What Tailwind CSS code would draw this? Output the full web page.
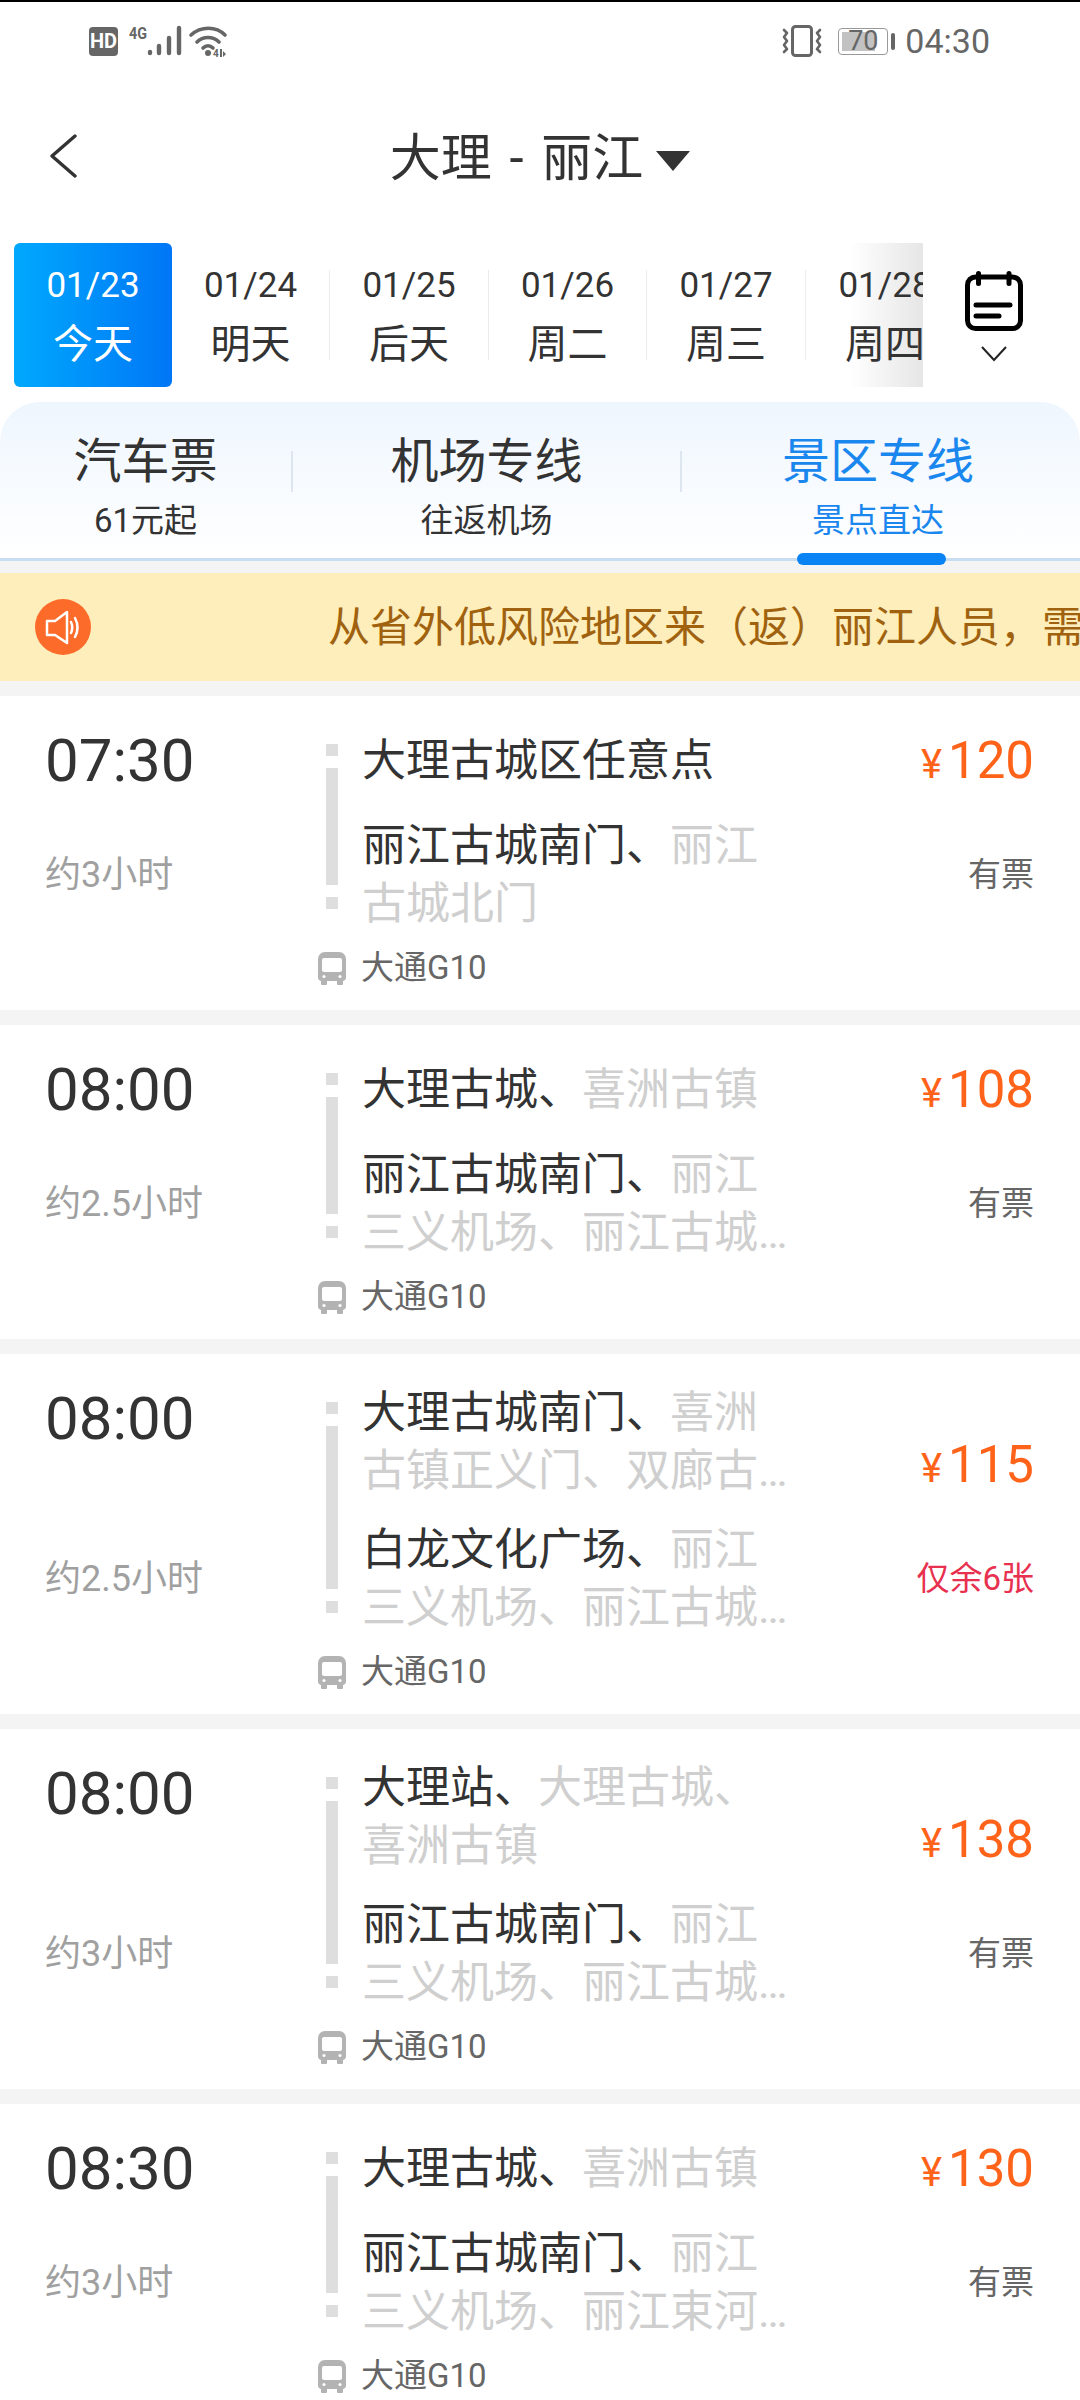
<!DOCTYPE html>
<html lang="zh-CN">
  <head>
    <meta charset="UTF-8" />
    <meta name="viewport" content="width=device-width, initial-scale=1.0" />
    <title>大理 - 丽江</title>
    <script src="https://cdn.jsdelivr.net/npm/@tailwindcss/browser@4"></script>
  </head>
  <body class="bg-[#f4f4f4] font-[family-name:Roboto,'Noto_Sans_CJK_SC',sans-serif] text-[#333333]">
    <div class="w-[1080px] h-[2400px] overflow-hidden flex flex-col">
      <!-- top white part -->
      <div class="bg-white border-t-2 border-black">
        <!-- status bar -->
        <div class="h-[78px] flex items-center justify-between pl-[89px] pr-[90px] text-[#666666]">
          <div class="flex items-center">
            <div class="w-[29px] h-[29px] rounded-[4px] bg-[#666666] text-white text-[20px] leading-[29px] font-bold text-center">HD</div>
            <svg width="106" height="32" viewBox="0 0 106 32" class="ml-[11px]">
              <text x="0" y="14" font-size="17" font-weight="700" textLength="18" lengthAdjust="spacingAndGlyphs" fill="#666666">4G</text>
              <g stroke="#666666" stroke-width="4.4" stroke-linecap="round">
                <path d="M21 28v-1" /><path d="M30 28v-7" /><path d="M40 28v-15" /><path d="M50 28v-25" />
              </g>
              <g fill="none" stroke="#666666" stroke-width="3.6" stroke-linecap="round">
                <path d="M62 10c10-9 25-9 34 0" />
                <path d="M68 17c6-6 16-6 22 0" />
                <path d="M74 23c3-3 7-3 10 0" />
              </g>
              <circle cx="79" cy="28" r="3" fill="#666666" />
              <text x="84" y="32" font-size="10" font-weight="700" fill="#666666">4</text>
              <path d="M91 24h2v8h-2zM94 26l3 3-3 3z" fill="#666666" />
            </svg>
          </div>
          <div class="flex items-center">
            <svg width="40" height="32" viewBox="0 0 40 32" fill="none" stroke="#666666">
              <rect x="10.5" y="1.5" width="19" height="29" rx="3" stroke-width="3" />
              <path d="M2 5l3 3-3 4 3 4-3 4 3 4-3 3M38 5l-3 3 3 4-3 4 3 4-3 4 3 3" stroke-width="2.6" stroke-linecap="round" stroke-linejoin="round" />
            </svg>
            <div class="ml-[16px] w-[50px] h-[27px] border border-[#999999] rounded-[4px] p-[3px] flex">
              <div class="flex-1 bg-[linear-gradient(90deg,#c2c2c2_78%,transparent_78%)] text-[27px] leading-[19px] text-center text-[#666666]">70</div>
            </div>
            <div class="ml-[3px] w-[4px] h-[17px] rounded-full bg-[#666666]"></div>
            <div class="ml-[10px] text-[34px] leading-[40px]">04:30</div>
          </div>
        </div>

        <!-- nav -->
        <div class="h-[156px] flex items-center">
          <div class="w-[90px] pl-[49px] shrink-0 mt-[-5px]">
            <svg width="28" height="44" viewBox="0 0 28 44" fill="none" stroke="#333333" stroke-width="3.4" stroke-linecap="round" stroke-linejoin="round" class="block">
              <path d="M26 2L3 22l23 20" />
            </svg>
          </div>
          <div class="flex-1 pr-[90px] flex items-center justify-center">
            <span class="text-[51px] leading-[60px] whitespace-pre [word-spacing:5px] mt-[1px]">大理 - 丽江</span>
            <svg width="34" height="20" viewBox="0 0 34 20" class="ml-[13px] mt-[6px]"><path d="M0 0h34L17 20z" fill="#333333" /></svg>
          </div>
        </div>

        <!-- dates -->
        <div class="mt-[7px] h-[144px] flex">
          <div class="w-[923px] shrink-0 pl-[14px] flex overflow-hidden bg-[linear-gradient(to_right,#ffffff_92%,#e6e6e6)]">
            <div class="w-[158px] shrink-0 rounded-[6px] bg-gradient-to-r from-[#00a8fd] to-[#0076f6] text-white flex flex-col items-center pt-[23px]">
              <div class="text-[35px] leading-[40px]">01/23</div>
              <div class="mt-[15px] text-[40px] leading-[48px]">今天</div>
            </div>
            <div class="w-[157px] shrink-0 flex flex-col items-center pt-[23px]">
              <div class="text-[35px] leading-[40px]">01/24</div>
              <div class="mt-[15px] text-[40px] leading-[48px]">明天</div>
            </div>
            <div class="w-px h-[90px] shrink-0 self-center bg-[#ececec]"></div>
            <div class="w-[158px] shrink-0 flex flex-col items-center pt-[23px]">
              <div class="text-[35px] leading-[40px]">01/25</div>
              <div class="mt-[15px] text-[40px] leading-[48px]">后天</div>
            </div>
            <div class="w-px h-[90px] shrink-0 self-center bg-[#ececec]"></div>
            <div class="w-[157px] shrink-0 flex flex-col items-center pt-[23px]">
              <div class="text-[35px] leading-[40px]">01/26</div>
              <div class="mt-[15px] text-[40px] leading-[48px]">周二</div>
            </div>
            <div class="w-px h-[90px] shrink-0 self-center bg-[#ececec]"></div>
            <div class="w-[158px] shrink-0 flex flex-col items-center pt-[23px]">
              <div class="text-[35px] leading-[40px]">01/27</div>
              <div class="mt-[15px] text-[40px] leading-[48px]">周三</div>
            </div>
            <div class="w-px h-[90px] shrink-0 self-center bg-[#ececec]"></div>
            <div class="w-[158px] shrink-0 flex flex-col items-center pt-[23px]">
              <div class="text-[35px] leading-[40px]">01/28</div>
              <div class="mt-[15px] text-[40px] leading-[48px]">周四</div>
            </div>
          </div>
          <div class="flex-1 pl-[42px] pt-[28px]">
            <svg width="58" height="60" viewBox="0 0 58 60" fill="none" stroke="#000000" stroke-width="5" stroke-linecap="round" class="block">
              <rect x="2.5" y="6" width="53" height="51.5" rx="8" />
              <path d="M13.5 2.5v10M44 2.5v10M11 34h34M11 45h23" />
            </svg>
            <svg width="28" height="18" viewBox="0 0 28 18" fill="none" stroke="#222222" stroke-width="2" class="block ml-[15px] mt-[14px]">
              <path d="M2 2l12 13L26 2" />
            </svg>
          </div>
        </div>

        <!-- tabs -->
        <div class="mt-[15px] h-[159px] rounded-t-[40px] bg-gradient-to-b from-[#eef6fe] to-white border-b-[3px] border-[#c9ddf2] flex">
          <div class="w-[291px] shrink-0 flex flex-col items-center pt-[32px]">
            <div class="text-[48px] leading-[56px]">汽车票</div>
            <div class="mt-[11px] text-[33px] leading-[40px]">61元起</div>
          </div>
          <div class="w-[2px] h-[41px] shrink-0 mt-[49px] bg-[#dde5ee]"></div>
          <div class="w-[387px] shrink-0 flex flex-col items-center pt-[32px]">
            <div class="text-[48px] leading-[56px]">机场专线</div>
            <div class="mt-[11px] text-[33px] leading-[40px]">往返机场</div>
          </div>
          <div class="w-[2px] h-[41px] shrink-0 mt-[49px] bg-[#dde5ee]"></div>
          <div class="flex-1 pr-[6px] flex flex-col items-center pt-[32px] text-[#1a87ee] relative">
            <div class="text-[48px] leading-[56px]">景区专线</div>
            <div class="mt-[11px] text-[33px] leading-[40px]">景点直达</div>
            <div class="absolute left-[115px] bottom-[-7px] w-[149px] h-[12px] rounded-full bg-[#0a84f4]"></div>
          </div>
        </div>
      </div>

      <!-- notice -->
      <div class="mt-[12px] h-[108px] shrink-0 bg-[#fdeebb] flex items-center pl-[35px] overflow-hidden">
        <div class="w-[56px] h-[56px] shrink-0 rounded-full bg-[#fd6b2a]">
          <svg width="56" height="56" viewBox="0 0 56 56" fill="none" stroke="#ffffff" stroke-width="2.5" stroke-linecap="round" stroke-linejoin="round">
            <path d="M12 22h8l12-9v31l-12-8h-8z" />
            <path d="M36 23q2.5 5.5 0 11M40 19q5 9.5 0 19" />
          </svg>
        </div>
        <div class="ml-[237px] mt-[2px] text-[42px] leading-[56px] text-[#a0620f] whitespace-nowrap">从省外低风险地区来（返）丽江人员，需持核酸检测阴性证明</div>
      </div>

      <!-- list -->
      <div class="mt-[15px] flex flex-col gap-[15px]">
        <div class="bg-white flex">
          <div class="w-[318px] shrink-0 pl-[45px] pt-[36px] pb-[115px] flex flex-col justify-between">
            <div class="text-[60px] leading-[58px]">07:30</div>
            <div class="text-[36px] leading-[40px] text-[#a0a0a0]">约3小时</div>
          </div>
          <div class="w-[478px] shrink-0 pt-[30px] pb-[19px]">
            <div class="flex">
              <div class="w-[12px] ml-[8px] mt-[18px] mb-[24px] flex flex-col gap-[12px] shrink-0">
                <div class="h-[12px] bg-[#dedede]"></div>
                <div class="flex-1 bg-[#dedede]"></div>
                <div class="h-[12px] bg-[#dedede]"></div>
              </div>
              <div class="ml-[24px] w-[433px] text-[44px] leading-[58px] text-[#cfcfcf]">
                <div class="min-h-[70px] flex items-center"><p class="line-clamp-2"><span class="text-[#333333]">大理古城区任意点</span></p></div>
                <p class="mt-[21px] line-clamp-2"><span class="text-[#333333]">丽江古城南门、</span>丽江古城北门</p>
              </div>
            </div>
            <div class="mt-[12px] h-[46px] flex items-center">
              <svg width="28" height="33" viewBox="0 0 28 33" class="shrink-0">
                <path d="M3 27h6v5a1 1 0 0 1-1 1H4a1 1 0 0 1-1-1zM19 27h6v5a1 1 0 0 1-1 1h-4a1 1 0 0 1-1-1z" fill="#b3b3b3" />
                <path d="M7 0h14a7 7 0 0 1 7 7v18a4 4 0 0 1-4 4H4a4 4 0 0 1-4-4V7a7 7 0 0 1 7-7z" fill="#b3b3b3" />
                <rect x="4" y="6" width="20" height="14" rx="2" fill="#ffffff" />
                <circle cx="6" cy="24.5" r="1.6" fill="#ffffff" /><circle cx="22" cy="24.5" r="1.6" fill="#ffffff" />
              </svg>
              <span class="ml-[15px] text-[33px] leading-[46px] text-[#666666]">大通G10</span>
            </div>
          </div>
          <div class="flex-1 pr-[46px] pb-[115px] flex flex-col items-end justify-end">
            <div class="h-[60px] flex items-baseline text-[#ff6319] leading-[60px]"><span class="text-[40px]">¥</span><span class="ml-[6px] text-[51px]">120</span></div>
            <div class="mt-[64px] text-[33px] leading-[40px] text-[#666666]">有票</div>
          </div>
        </div>

        <div class="bg-white flex">
          <div class="w-[318px] shrink-0 pl-[45px] pt-[36px] pb-[115px] flex flex-col justify-between">
            <div class="text-[60px] leading-[58px]">08:00</div>
            <div class="text-[36px] leading-[40px] text-[#a0a0a0]">约2.5小时</div>
          </div>
          <div class="w-[478px] shrink-0 pt-[30px] pb-[19px]">
            <div class="flex">
              <div class="w-[12px] ml-[8px] mt-[18px] mb-[24px] flex flex-col gap-[12px] shrink-0">
                <div class="h-[12px] bg-[#dedede]"></div>
                <div class="flex-1 bg-[#dedede]"></div>
                <div class="h-[12px] bg-[#dedede]"></div>
              </div>
              <div class="ml-[24px] w-[433px] text-[44px] leading-[58px] text-[#cfcfcf]">
                <div class="min-h-[70px] flex items-center"><p class="line-clamp-2"><span class="text-[#333333]">大理古城、</span>喜洲古镇</p></div>
                <p class="mt-[21px] line-clamp-2"><span class="text-[#333333]">丽江古城南门、</span>丽江三义机场、丽江古城南门、丽江古城北门</p>
              </div>
            </div>
            <div class="mt-[12px] h-[46px] flex items-center">
              <svg width="28" height="33" viewBox="0 0 28 33" class="shrink-0">
                <path d="M3 27h6v5a1 1 0 0 1-1 1H4a1 1 0 0 1-1-1zM19 27h6v5a1 1 0 0 1-1 1h-4a1 1 0 0 1-1-1z" fill="#b3b3b3" />
                <path d="M7 0h14a7 7 0 0 1 7 7v18a4 4 0 0 1-4 4H4a4 4 0 0 1-4-4V7a7 7 0 0 1 7-7z" fill="#b3b3b3" />
                <rect x="4" y="6" width="20" height="14" rx="2" fill="#ffffff" />
                <circle cx="6" cy="24.5" r="1.6" fill="#ffffff" /><circle cx="22" cy="24.5" r="1.6" fill="#ffffff" />
              </svg>
              <span class="ml-[15px] text-[33px] leading-[46px] text-[#666666]">大通G10</span>
            </div>
          </div>
          <div class="flex-1 pr-[46px] pb-[115px] flex flex-col items-end justify-end">
            <div class="h-[60px] flex items-baseline text-[#ff6319] leading-[60px]"><span class="text-[40px]">¥</span><span class="ml-[6px] text-[51px]">108</span></div>
            <div class="mt-[64px] text-[33px] leading-[40px] text-[#666666]">有票</div>
          </div>
        </div>

        <div class="bg-white flex">
          <div class="w-[318px] shrink-0 pl-[45px] pt-[36px] pb-[115px] flex flex-col justify-between">
            <div class="text-[60px] leading-[58px]">08:00</div>
            <div class="text-[36px] leading-[40px] text-[#a0a0a0]">约2.5小时</div>
          </div>
          <div class="w-[478px] shrink-0 pt-[30px] pb-[19px]">
            <div class="flex">
              <div class="w-[12px] ml-[8px] mt-[18px] mb-[24px] flex flex-col gap-[12px] shrink-0">
                <div class="h-[12px] bg-[#dedede]"></div>
                <div class="flex-1 bg-[#dedede]"></div>
                <div class="h-[12px] bg-[#dedede]"></div>
              </div>
              <div class="ml-[24px] w-[433px] text-[44px] leading-[58px] text-[#cfcfcf]">
                <div class="min-h-[70px] flex items-center"><p class="line-clamp-2"><span class="text-[#333333]">大理古城南门、</span>喜洲古镇正义门、双廊古渔村、双廊古镇</p></div>
                <p class="mt-[21px] line-clamp-2"><span class="text-[#333333]">白龙文化广场、</span>丽江三义机场、丽江古城南门、丽江古城北门</p>
              </div>
            </div>
            <div class="mt-[12px] h-[46px] flex items-center">
              <svg width="28" height="33" viewBox="0 0 28 33" class="shrink-0">
                <path d="M3 27h6v5a1 1 0 0 1-1 1H4a1 1 0 0 1-1-1zM19 27h6v5a1 1 0 0 1-1 1h-4a1 1 0 0 1-1-1z" fill="#b3b3b3" />
                <path d="M7 0h14a7 7 0 0 1 7 7v18a4 4 0 0 1-4 4H4a4 4 0 0 1-4-4V7a7 7 0 0 1 7-7z" fill="#b3b3b3" />
                <rect x="4" y="6" width="20" height="14" rx="2" fill="#ffffff" />
                <circle cx="6" cy="24.5" r="1.6" fill="#ffffff" /><circle cx="22" cy="24.5" r="1.6" fill="#ffffff" />
              </svg>
              <span class="ml-[15px] text-[33px] leading-[46px] text-[#666666]">大通G10</span>
            </div>
          </div>
          <div class="flex-1 pr-[46px] pb-[115px] flex flex-col items-end justify-end">
            <div class="h-[60px] flex items-baseline text-[#ff6319] leading-[60px]"><span class="text-[40px]">¥</span><span class="ml-[6px] text-[51px]">115</span></div>
            <div class="mt-[64px] text-[33px] leading-[40px] text-[#e8304f]">仅余6张</div>
          </div>
        </div>

        <div class="bg-white flex">
          <div class="w-[318px] shrink-0 pl-[45px] pt-[36px] pb-[115px] flex flex-col justify-between">
            <div class="text-[60px] leading-[58px]">08:00</div>
            <div class="text-[36px] leading-[40px] text-[#a0a0a0]">约3小时</div>
          </div>
          <div class="w-[478px] shrink-0 pt-[30px] pb-[19px]">
            <div class="flex">
              <div class="w-[12px] ml-[8px] mt-[18px] mb-[24px] flex flex-col gap-[12px] shrink-0">
                <div class="h-[12px] bg-[#dedede]"></div>
                <div class="flex-1 bg-[#dedede]"></div>
                <div class="h-[12px] bg-[#dedede]"></div>
              </div>
              <div class="ml-[24px] w-[433px] text-[44px] leading-[58px] text-[#cfcfcf]">
                <div class="min-h-[70px] flex items-center"><p class="line-clamp-2"><span class="text-[#333333]">大理站、</span>大理古城、喜洲古镇</p></div>
                <p class="mt-[21px] line-clamp-2"><span class="text-[#333333]">丽江古城南门、</span>丽江三义机场、丽江古城南门、丽江古城北门</p>
              </div>
            </div>
            <div class="mt-[12px] h-[46px] flex items-center">
              <svg width="28" height="33" viewBox="0 0 28 33" class="shrink-0">
                <path d="M3 27h6v5a1 1 0 0 1-1 1H4a1 1 0 0 1-1-1zM19 27h6v5a1 1 0 0 1-1 1h-4a1 1 0 0 1-1-1z" fill="#b3b3b3" />
                <path d="M7 0h14a7 7 0 0 1 7 7v18a4 4 0 0 1-4 4H4a4 4 0 0 1-4-4V7a7 7 0 0 1 7-7z" fill="#b3b3b3" />
                <rect x="4" y="6" width="20" height="14" rx="2" fill="#ffffff" />
                <circle cx="6" cy="24.5" r="1.6" fill="#ffffff" /><circle cx="22" cy="24.5" r="1.6" fill="#ffffff" />
              </svg>
              <span class="ml-[15px] text-[33px] leading-[46px] text-[#666666]">大通G10</span>
            </div>
          </div>
          <div class="flex-1 pr-[46px] pb-[115px] flex flex-col items-end justify-end">
            <div class="h-[60px] flex items-baseline text-[#ff6319] leading-[60px]"><span class="text-[40px]">¥</span><span class="ml-[6px] text-[51px]">138</span></div>
            <div class="mt-[64px] text-[33px] leading-[40px] text-[#666666]">有票</div>
          </div>
        </div>

        <div class="bg-white flex">
          <div class="w-[318px] shrink-0 pl-[45px] pt-[36px] pb-[115px] flex flex-col justify-between">
            <div class="text-[60px] leading-[58px]">08:30</div>
            <div class="text-[36px] leading-[40px] text-[#a0a0a0]">约3小时</div>
          </div>
          <div class="w-[478px] shrink-0 pt-[30px] pb-[19px]">
            <div class="flex">
              <div class="w-[12px] ml-[8px] mt-[18px] mb-[24px] flex flex-col gap-[12px] shrink-0">
                <div class="h-[12px] bg-[#dedede]"></div>
                <div class="flex-1 bg-[#dedede]"></div>
                <div class="h-[12px] bg-[#dedede]"></div>
              </div>
              <div class="ml-[24px] w-[433px] text-[44px] leading-[58px] text-[#cfcfcf]">
                <div class="min-h-[70px] flex items-center"><p class="line-clamp-2"><span class="text-[#333333]">大理古城、</span>喜洲古镇</p></div>
                <p class="mt-[21px] line-clamp-2"><span class="text-[#333333]">丽江古城南门、</span>丽江三义机场、丽江束河古镇、丽江古城南门</p>
              </div>
            </div>
            <div class="mt-[12px] h-[46px] flex items-center">
              <svg width="28" height="33" viewBox="0 0 28 33" class="shrink-0">
                <path d="M3 27h6v5a1 1 0 0 1-1 1H4a1 1 0 0 1-1-1zM19 27h6v5a1 1 0 0 1-1 1h-4a1 1 0 0 1-1-1z" fill="#b3b3b3" />
                <path d="M7 0h14a7 7 0 0 1 7 7v18a4 4 0 0 1-4 4H4a4 4 0 0 1-4-4V7a7 7 0 0 1 7-7z" fill="#b3b3b3" />
                <rect x="4" y="6" width="20" height="14" rx="2" fill="#ffffff" />
                <circle cx="6" cy="24.5" r="1.6" fill="#ffffff" /><circle cx="22" cy="24.5" r="1.6" fill="#ffffff" />
              </svg>
              <span class="ml-[15px] text-[33px] leading-[46px] text-[#666666]">大通G10</span>
            </div>
          </div>
          <div class="flex-1 pr-[46px] pb-[115px] flex flex-col items-end justify-end">
            <div class="h-[60px] flex items-baseline text-[#ff6319] leading-[60px]"><span class="text-[40px]">¥</span><span class="ml-[6px] text-[51px]">130</span></div>
            <div class="mt-[64px] text-[33px] leading-[40px] text-[#666666]">有票</div>
          </div>
        </div>
      </div>
    </div>
  </body>
</html>
